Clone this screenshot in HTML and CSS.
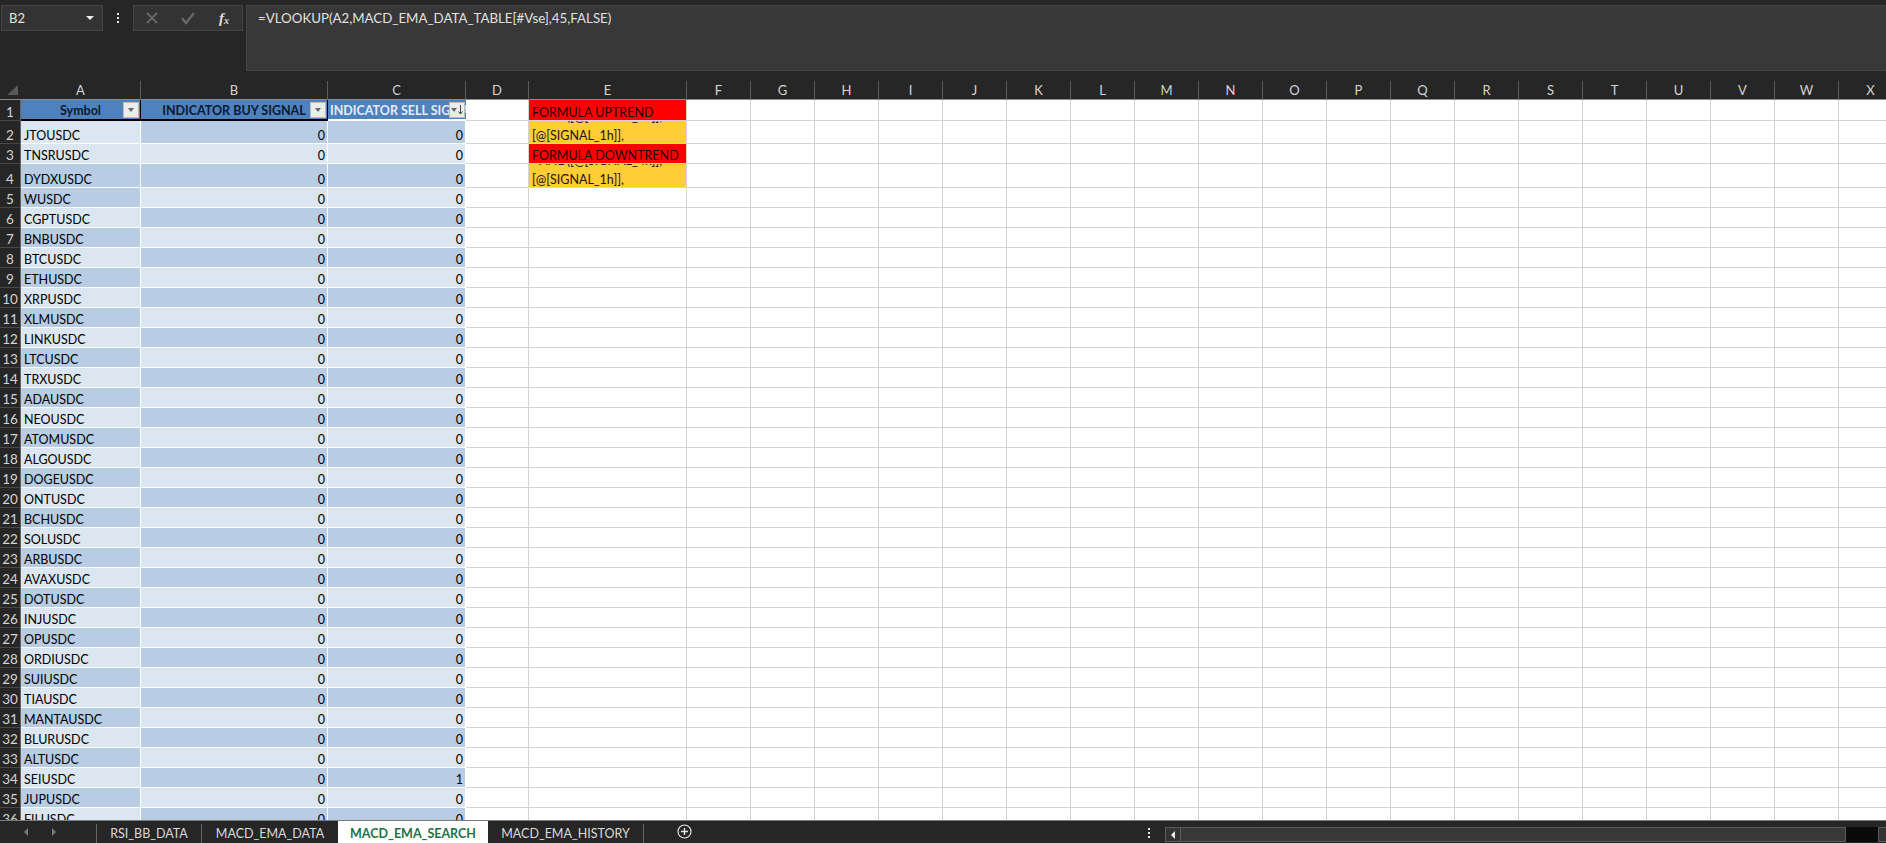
FILE: index.html
```html
<!DOCTYPE html>
<html lang="en">
<head>
<meta charset="UTF-8">
<title>MACD_EMA_SEARCH</title>
<link rel="stylesheet" href="styles.css">
</head>
<body>

<div class="app">
    <div class="formula-bar">
        <div class="name-box"><span>B2</span><i class="caret"></i></div>
        <div class="vdots"><b></b><b></b><b></b></div>
        <div class="fx-buttons">
            <svg width="14" height="14" viewBox="0 0 14 14"><path d="M2 2 L12 12 M12 2 L2 12" stroke="#666" stroke-width="2" fill="none"/></svg>
            <svg width="16" height="14" viewBox="0 0 16 14"><path d="M2 7 L6 12 L14 2" stroke="#666" stroke-width="2.5" fill="none"/></svg>
            <span class="fx">f<sub>x</sub></span>
        </div>
        <div class="formula-input">=VLOOKUP(A2,MACD_EMA_DATA_TABLE[#Vse],45,FALSE)</div>
    </div>

    <div class="sheet">
        <table class="grid">
            <colgroup>
                <col class="c-row"><col class="c-a"><col class="c-b"><col class="c-c"><col class="c-d"><col class="c-e">
                <col><col><col><col><col><col><col><col><col><col><col><col><col><col><col><col><col><col><col>
            </colgroup>
            <thead>
                <tr>
                    <th class="corner"><i></i></th><th>A</th><th>B</th><th>C</th><th>D</th><th>E</th><th>F</th><th>G</th><th>H</th><th>I</th><th>J</th><th>K</th><th>L</th><th>M</th><th>N</th><th>O</th><th>P</th><th>Q</th><th>R</th><th>S</th><th>T</th><th>U</th><th>V</th><th>W</th><th>X</th>
                </tr>
            </thead>
            <tbody>
                <tr class="r-head"><th>1</th>
                    <td class="head"><div class="head-in"><span class="label">Symbol</span><span class="filter"><i class="caret"></i></span></div></td>
                    <td class="head"><div class="head-in"><span class="label">INDICATOR BUY SIGNAL</span><span class="filter"><i class="caret"></i></span></div></td>
                    <td class="head head-sel"><div class="head-in"><span class="label">INDICATOR SELL SIGNAL</span><span class="filter"><i class="caret"></i><svg width="5" height="10" viewBox="0 0 5 10"><path d="M2.5 0 V9 M0.5 6.5 L2.5 9 L4.5 6.5" stroke="#444" fill="none"/></svg></span></div></td>
                    <td></td><td class="red">FORMULA UPTREND</td><td></td><td></td><td></td><td></td><td></td><td></td><td></td><td></td><td></td><td></td><td></td><td></td><td></td><td></td><td></td><td></td><td></td><td></td><td></td></tr>
                <tr class="r-tall"><th>2</th><td class="sym lt">JTOUSDC</td><td class="num dk">0</td><td class="num dk">0</td><td></td><td class="amber"><div class="wrap"><span>=AND([@[SIGNAL_4h]],</span><span>[@[SIGNAL_1h]],</span></div></td><td></td><td></td><td></td><td></td><td></td><td></td><td></td><td></td><td></td><td></td><td></td><td></td><td></td><td></td><td></td><td></td><td></td><td></td><td></td></tr>
                <tr><th>3</th><td class="sym lt">TNSRUSDC</td><td class="num lt">0</td><td class="num lt">0</td><td></td><td class="red">FORMULA DOWNTREND</td><td></td><td></td><td></td><td></td><td></td><td></td><td></td><td></td><td></td><td></td><td></td><td></td><td></td><td></td><td></td><td></td><td></td><td></td><td></td></tr>
                <tr class="r-tall"><th>4</th><td class="sym dk">DYDXUSDC</td><td class="num dk">0</td><td class="num dk">0</td><td></td><td class="amber"><div class="wrap"><span>=AND([@[SIGNAL_4h]],</span><span>[@[SIGNAL_1h]],</span></div></td><td></td><td></td><td></td><td></td><td></td><td></td><td></td><td></td><td></td><td></td><td></td><td></td><td></td><td></td><td></td><td></td><td></td><td></td><td></td></tr>
                <tr><th>5</th><td class="sym dk">WUSDC</td><td class="num lt">0</td><td class="num lt">0</td><td></td><td></td><td></td><td></td><td></td><td></td><td></td><td></td><td></td><td></td><td></td><td></td><td></td><td></td><td></td><td></td><td></td><td></td><td></td><td></td><td></td></tr>
                <tr><th>6</th><td class="sym lt">CGPTUSDC</td><td class="num dk">0</td><td class="num dk">0</td><td></td><td></td><td></td><td></td><td></td><td></td><td></td><td></td><td></td><td></td><td></td><td></td><td></td><td></td><td></td><td></td><td></td><td></td><td></td><td></td><td></td></tr>
                <tr><th>7</th><td class="sym dk">BNBUSDC</td><td class="num lt">0</td><td class="num lt">0</td><td></td><td></td><td></td><td></td><td></td><td></td><td></td><td></td><td></td><td></td><td></td><td></td><td></td><td></td><td></td><td></td><td></td><td></td><td></td><td></td><td></td></tr>
                <tr><th>8</th><td class="sym lt">BTCUSDC</td><td class="num dk">0</td><td class="num dk">0</td><td></td><td></td><td></td><td></td><td></td><td></td><td></td><td></td><td></td><td></td><td></td><td></td><td></td><td></td><td></td><td></td><td></td><td></td><td></td><td></td><td></td></tr>
                <tr><th>9</th><td class="sym dk">ETHUSDC</td><td class="num lt">0</td><td class="num lt">0</td><td></td><td></td><td></td><td></td><td></td><td></td><td></td><td></td><td></td><td></td><td></td><td></td><td></td><td></td><td></td><td></td><td></td><td></td><td></td><td></td><td></td></tr>
                <tr><th>10</th><td class="sym lt">XRPUSDC</td><td class="num dk">0</td><td class="num dk">0</td><td></td><td></td><td></td><td></td><td></td><td></td><td></td><td></td><td></td><td></td><td></td><td></td><td></td><td></td><td></td><td></td><td></td><td></td><td></td><td></td><td></td></tr>
                <tr><th>11</th><td class="sym dk">XLMUSDC</td><td class="num lt">0</td><td class="num lt">0</td><td></td><td></td><td></td><td></td><td></td><td></td><td></td><td></td><td></td><td></td><td></td><td></td><td></td><td></td><td></td><td></td><td></td><td></td><td></td><td></td><td></td></tr>
                <tr><th>12</th><td class="sym lt">LINKUSDC</td><td class="num dk">0</td><td class="num dk">0</td><td></td><td></td><td></td><td></td><td></td><td></td><td></td><td></td><td></td><td></td><td></td><td></td><td></td><td></td><td></td><td></td><td></td><td></td><td></td><td></td><td></td></tr>
                <tr><th>13</th><td class="sym dk">LTCUSDC</td><td class="num lt">0</td><td class="num lt">0</td><td></td><td></td><td></td><td></td><td></td><td></td><td></td><td></td><td></td><td></td><td></td><td></td><td></td><td></td><td></td><td></td><td></td><td></td><td></td><td></td><td></td></tr>
                <tr><th>14</th><td class="sym lt">TRXUSDC</td><td class="num dk">0</td><td class="num dk">0</td><td></td><td></td><td></td><td></td><td></td><td></td><td></td><td></td><td></td><td></td><td></td><td></td><td></td><td></td><td></td><td></td><td></td><td></td><td></td><td></td><td></td></tr>
                <tr><th>15</th><td class="sym dk">ADAUSDC</td><td class="num lt">0</td><td class="num lt">0</td><td></td><td></td><td></td><td></td><td></td><td></td><td></td><td></td><td></td><td></td><td></td><td></td><td></td><td></td><td></td><td></td><td></td><td></td><td></td><td></td><td></td></tr>
                <tr><th>16</th><td class="sym lt">NEOUSDC</td><td class="num dk">0</td><td class="num dk">0</td><td></td><td></td><td></td><td></td><td></td><td></td><td></td><td></td><td></td><td></td><td></td><td></td><td></td><td></td><td></td><td></td><td></td><td></td><td></td><td></td><td></td></tr>
                <tr><th>17</th><td class="sym dk">ATOMUSDC</td><td class="num lt">0</td><td class="num lt">0</td><td></td><td></td><td></td><td></td><td></td><td></td><td></td><td></td><td></td><td></td><td></td><td></td><td></td><td></td><td></td><td></td><td></td><td></td><td></td><td></td><td></td></tr>
                <tr><th>18</th><td class="sym lt">ALGOUSDC</td><td class="num dk">0</td><td class="num dk">0</td><td></td><td></td><td></td><td></td><td></td><td></td><td></td><td></td><td></td><td></td><td></td><td></td><td></td><td></td><td></td><td></td><td></td><td></td><td></td><td></td><td></td></tr>
                <tr><th>19</th><td class="sym dk">DOGEUSDC</td><td class="num lt">0</td><td class="num lt">0</td><td></td><td></td><td></td><td></td><td></td><td></td><td></td><td></td><td></td><td></td><td></td><td></td><td></td><td></td><td></td><td></td><td></td><td></td><td></td><td></td><td></td></tr>
                <tr><th>20</th><td class="sym lt">ONTUSDC</td><td class="num dk">0</td><td class="num dk">0</td><td></td><td></td><td></td><td></td><td></td><td></td><td></td><td></td><td></td><td></td><td></td><td></td><td></td><td></td><td></td><td></td><td></td><td></td><td></td><td></td><td></td></tr>
                <tr><th>21</th><td class="sym dk">BCHUSDC</td><td class="num lt">0</td><td class="num lt">0</td><td></td><td></td><td></td><td></td><td></td><td></td><td></td><td></td><td></td><td></td><td></td><td></td><td></td><td></td><td></td><td></td><td></td><td></td><td></td><td></td><td></td></tr>
                <tr><th>22</th><td class="sym lt">SOLUSDC</td><td class="num dk">0</td><td class="num dk">0</td><td></td><td></td><td></td><td></td><td></td><td></td><td></td><td></td><td></td><td></td><td></td><td></td><td></td><td></td><td></td><td></td><td></td><td></td><td></td><td></td><td></td></tr>
                <tr><th>23</th><td class="sym dk">ARBUSDC</td><td class="num lt">0</td><td class="num lt">0</td><td></td><td></td><td></td><td></td><td></td><td></td><td></td><td></td><td></td><td></td><td></td><td></td><td></td><td></td><td></td><td></td><td></td><td></td><td></td><td></td><td></td></tr>
                <tr><th>24</th><td class="sym lt">AVAXUSDC</td><td class="num dk">0</td><td class="num dk">0</td><td></td><td></td><td></td><td></td><td></td><td></td><td></td><td></td><td></td><td></td><td></td><td></td><td></td><td></td><td></td><td></td><td></td><td></td><td></td><td></td><td></td></tr>
                <tr><th>25</th><td class="sym dk">DOTUSDC</td><td class="num lt">0</td><td class="num lt">0</td><td></td><td></td><td></td><td></td><td></td><td></td><td></td><td></td><td></td><td></td><td></td><td></td><td></td><td></td><td></td><td></td><td></td><td></td><td></td><td></td><td></td></tr>
                <tr><th>26</th><td class="sym lt">INJUSDC</td><td class="num dk">0</td><td class="num dk">0</td><td></td><td></td><td></td><td></td><td></td><td></td><td></td><td></td><td></td><td></td><td></td><td></td><td></td><td></td><td></td><td></td><td></td><td></td><td></td><td></td><td></td></tr>
                <tr><th>27</th><td class="sym dk">OPUSDC</td><td class="num lt">0</td><td class="num lt">0</td><td></td><td></td><td></td><td></td><td></td><td></td><td></td><td></td><td></td><td></td><td></td><td></td><td></td><td></td><td></td><td></td><td></td><td></td><td></td><td></td><td></td></tr>
                <tr><th>28</th><td class="sym lt">ORDIUSDC</td><td class="num dk">0</td><td class="num dk">0</td><td></td><td></td><td></td><td></td><td></td><td></td><td></td><td></td><td></td><td></td><td></td><td></td><td></td><td></td><td></td><td></td><td></td><td></td><td></td><td></td><td></td></tr>
                <tr><th>29</th><td class="sym dk">SUIUSDC</td><td class="num lt">0</td><td class="num lt">0</td><td></td><td></td><td></td><td></td><td></td><td></td><td></td><td></td><td></td><td></td><td></td><td></td><td></td><td></td><td></td><td></td><td></td><td></td><td></td><td></td><td></td></tr>
                <tr><th>30</th><td class="sym lt">TIAUSDC</td><td class="num dk">0</td><td class="num dk">0</td><td></td><td></td><td></td><td></td><td></td><td></td><td></td><td></td><td></td><td></td><td></td><td></td><td></td><td></td><td></td><td></td><td></td><td></td><td></td><td></td><td></td></tr>
                <tr><th>31</th><td class="sym dk">MANTAUSDC</td><td class="num lt">0</td><td class="num lt">0</td><td></td><td></td><td></td><td></td><td></td><td></td><td></td><td></td><td></td><td></td><td></td><td></td><td></td><td></td><td></td><td></td><td></td><td></td><td></td><td></td><td></td></tr>
                <tr><th>32</th><td class="sym lt">BLURUSDC</td><td class="num dk">0</td><td class="num dk">0</td><td></td><td></td><td></td><td></td><td></td><td></td><td></td><td></td><td></td><td></td><td></td><td></td><td></td><td></td><td></td><td></td><td></td><td></td><td></td><td></td><td></td></tr>
                <tr><th>33</th><td class="sym dk">ALTUSDC</td><td class="num lt">0</td><td class="num lt">0</td><td></td><td></td><td></td><td></td><td></td><td></td><td></td><td></td><td></td><td></td><td></td><td></td><td></td><td></td><td></td><td></td><td></td><td></td><td></td><td></td><td></td></tr>
                <tr><th>34</th><td class="sym lt">SEIUSDC</td><td class="num dk">0</td><td class="num dk">1</td><td></td><td></td><td></td><td></td><td></td><td></td><td></td><td></td><td></td><td></td><td></td><td></td><td></td><td></td><td></td><td></td><td></td><td></td><td></td><td></td><td></td></tr>
                <tr><th>35</th><td class="sym dk">JUPUSDC</td><td class="num lt">0</td><td class="num lt">0</td><td></td><td></td><td></td><td></td><td></td><td></td><td></td><td></td><td></td><td></td><td></td><td></td><td></td><td></td><td></td><td></td><td></td><td></td><td></td><td></td><td></td></tr>
                <tr><th>36</th><td class="sym lt">FILUSDC</td><td class="num dk">0</td><td class="num dk">0</td><td></td><td></td><td></td><td></td><td></td><td></td><td></td><td></td><td></td><td></td><td></td><td></td><td></td><td></td><td></td><td></td><td></td><td></td><td></td><td></td><td></td></tr>
            </tbody>
        </table>
    </div>

    <div class="tabbar">
        <div class="tab-nav"><i class="arrow-l"></i><i class="arrow-r"></i></div>
        <div class="tabs">
            <div class="tab">RSI_BB_DATA</div>
            <div class="tab">MACD_EMA_DATA</div>
            <div class="tab active">MACD_EMA_SEARCH</div>
            <div class="tab">MACD_EMA_HISTORY</div>
        </div>
        <svg class="add-sheet" width="15" height="15" viewBox="0 0 15 15"><circle cx="7.5" cy="7.5" r="6.5" stroke="#e6e6e6" stroke-width="1.2" fill="none"/><path d="M7.5 4 V11 M4 7.5 H11" stroke="#e6e6e6" stroke-width="1.4"/></svg>
        <div class="vdots tab-dots"><b></b><b></b><b></b></div>
        <div class="hscroll">
            <div class="hs-btn"><i class="hs-arrow"></i></div>
            <div class="hs-thumb"></div>
            <div class="hs-track"></div>
            <div class="hs-btn"></div>
        </div>
    </div>
</div>

</body>
</html>
```

FILE: styles.css
```css
* { margin: 0; padding: 0; box-sizing: border-box; }
body {
    background: #262626;
    color: #000;
    font-family: Lato, sans-serif;
    font-size: 12.5px;
    overflow: hidden;
}
.app {
    display: flex;
    flex-direction: column;
    height: 100vh;
}

/* top formula bar */
.formula-bar {
    display: flex;
    align-items: flex-start;
    height: 81px;
    padding: 5px 0 0 1px;
    flex-shrink: 0;
}
.name-box {
    display: flex;
    align-items: center;
    justify-content: space-between;
    width: 102px;
    height: 26px;
    padding: 0 8px 0 7px;
    background: #333;
    border: 1px solid #444;
    color: #e4e4e4;
    font-size: 13px;
}
.caret {
    display: block;
    width: 0;
    height: 0;
    border-left: 4px solid transparent;
    border-right: 4px solid transparent;
    border-top: 4px solid #eee;
}
.vdots {
    display: flex;
    flex-direction: column;
    align-items: center;
    justify-content: center;
    gap: 2px;
    width: 30px;
    height: 26px;
}
.vdots b {
    display: block;
    width: 2px;
    height: 2px;
    background: #e8e8e8;
}
.fx-buttons {
    display: grid;
    grid-template-columns: repeat(3, 36px);
    align-items: center;
    justify-items: center;
    width: 110px;
    height: 26px;
    margin-right: 3px;
    background: #333;
    border: 1px solid #444;
}
.fx {
    color: #ddd;
    font-family: 'Liberation Serif', serif;
    font-style: italic;
    font-weight: bold;
    font-size: 15px;
    line-height: 1;
}
.fx sub { font-size: 10px; vertical-align: -1px; }
.formula-input {
    flex: 1;
    height: 66px;
    padding: 4px 11px;
    background: #383838;
    border: 1px solid #444;
    border-right: 0;
    color: #e0e0e0;
    font-size: 13.3px;
}

/* the grid */
.sheet {
    flex: 1;
    overflow: hidden;
    background: #fff;
}
.grid {
    table-layout: fixed;
    border-collapse: separate;
    border-spacing: 0;
    width: 1903px;
}
col { width: 64px; }
col.c-row { width: 21px; }
col.c-a { width: 120px; }
col.c-b { width: 187px; }
col.c-c { width: 138px; }
col.c-d { width: 63px; }
col.c-e { width: 158px; }

thead tr { height: 19px; }
thead th {
    background: #262626;
    border-right: 1px solid #5c5c5c;
    border-bottom: 1px solid #8c8c8c;
    color: #d4d4d4;
    font-weight: normal;
    font-size: 13px;
}
thead th.corner { padding: 0; border-right: 0; }
.corner i {
    display: block;
    width: 11px;
    height: 10px;
    margin-left: 7px;
    background: #5a5a5a;
    clip-path: polygon(100% 0, 100% 100%, 0 100%);
}
tbody tr { height: 20px; }
tbody tr.r-head { height: 21px; }
tbody tr.r-tall { height: 24px; }
tbody tr.r-tall:nth-child(2) { height: 23px; }
tbody th {
    background: #262626;
    border-right: 1px solid #666;
    border-bottom: 1px solid #484848;
    color: #d4d4d4;
    font-weight: normal;
    font-size: 13.5px;
    line-height: 15px;
    vertical-align: bottom;
}
td {
    padding: 0 3px;
    border-right: 1px solid #d4d4d4;
    border-bottom: 1px solid #d4d4d4;
    line-height: 15px;
    white-space: nowrap;
    overflow: hidden;
    vertical-align: bottom;
}
.lt { background: #dce6f1; }
.dk { background: #b8cce4; }
.lt, .dk { border-color: #fff; }
.num { text-align: right; padding-right: 2px; }
.red { background: #ff0000; color: #1c0000; }
.amber { background: #ffcd36; color: #1c1400; }
.wrap {
    display: flex;
    flex-direction: column;
    justify-content: flex-end;
    height: 22px;
    line-height: 19px;
    overflow: hidden;
}
.wrap span { flex-shrink: 0; }
.wrap span:last-child { margin-bottom: -2px; }
.r-tall:nth-child(4) .wrap { height: 23px; }

td.head {
    padding: 0;
    background: #4f81bd;
    border-right: 1px solid #000;
    border-bottom: 2px solid #000;
    font-weight: bold;
    color: #0b1a30;
    vertical-align: top;
}
td.head-sel {
    border-right: 0;
    border-bottom-color: #fff;
    color: #e3edf8;
}
.head-in {
    position: relative;
    height: 19px;
    line-height: 22px;
    text-align: center;
}
.head-sel .head-in { text-align: left; padding-left: 2px; }
.filter {
    position: absolute;
    top: 2px;
    right: 1px;
    display: flex;
    align-items: center;
    justify-content: center;
    gap: 1px;
    width: 16px;
    height: 16px;
    background: #ececec;
    border: 1px solid #bbb;
}
.filter .caret {
    border-left-width: 3px;
    border-right-width: 3px;
    border-top: 4px solid #666;
}

/* sheet tabs and scroll bar */
.tabbar {
    display: flex;
    height: 23px;
    flex-shrink: 0;
    border-top: 1px solid #7a7a7a;
    color: #dadada;
    font-size: 12.5px;
}
.tab-nav {
    display: flex;
    align-items: center;
    gap: 24px;
    width: 96px;
    padding-left: 24px;
}
.arrow-l, .arrow-r {
    display: block;
    width: 0;
    height: 0;
    border-top: 4px solid transparent;
    border-bottom: 4px solid transparent;
}
.arrow-l { border-right: 4px solid #777; }
.arrow-r { border-left: 4px solid #777; }
.tabs {
    display: grid;
    grid-template-columns: 105px 137px 150px 156px;
    align-items: end;
}
.tab {
    height: 19px;
    line-height: 19px;
    text-align: center;
    border-left: 1px solid #666;
}
.tab:last-child {
    border-left: 0;
    border-right: 1px solid #666;
}
.tab.active {
    height: 22px;
    line-height: 25px;
    background: #fff;
    border: 0;
    color: #1e7145;
    font-weight: bold;
}
.add-sheet {
    margin: 3px 0 0 33px;
}
.tab-dots {
    width: 2px;
    height: 22px;
    margin: 1px 15px 0 auto;
}
.hscroll {
    display: flex;
    width: 721px;
    height: 15px;
    margin-top: 6px;
}
.hs-btn {
    display: flex;
    align-items: center;
    justify-content: center;
    width: 16px;
    background: #333;
    border: 1px solid #5a5a5a;
}
.hs-btn:last-child {
    width: 8px;
    border-right: 0;
}
.hs-arrow {
    display: block;
    width: 0;
    height: 0;
    border-top: 4px solid transparent;
    border-bottom: 4px solid transparent;
    border-right: 4px solid #eee;
}
.hs-thumb {
    flex: 1;
    background: #383838;
    border: 1px solid #5a5a5a;
    border-left: 0;
}
.hs-track {
    width: 32px;
    background: #0a0a0a;
}
```
